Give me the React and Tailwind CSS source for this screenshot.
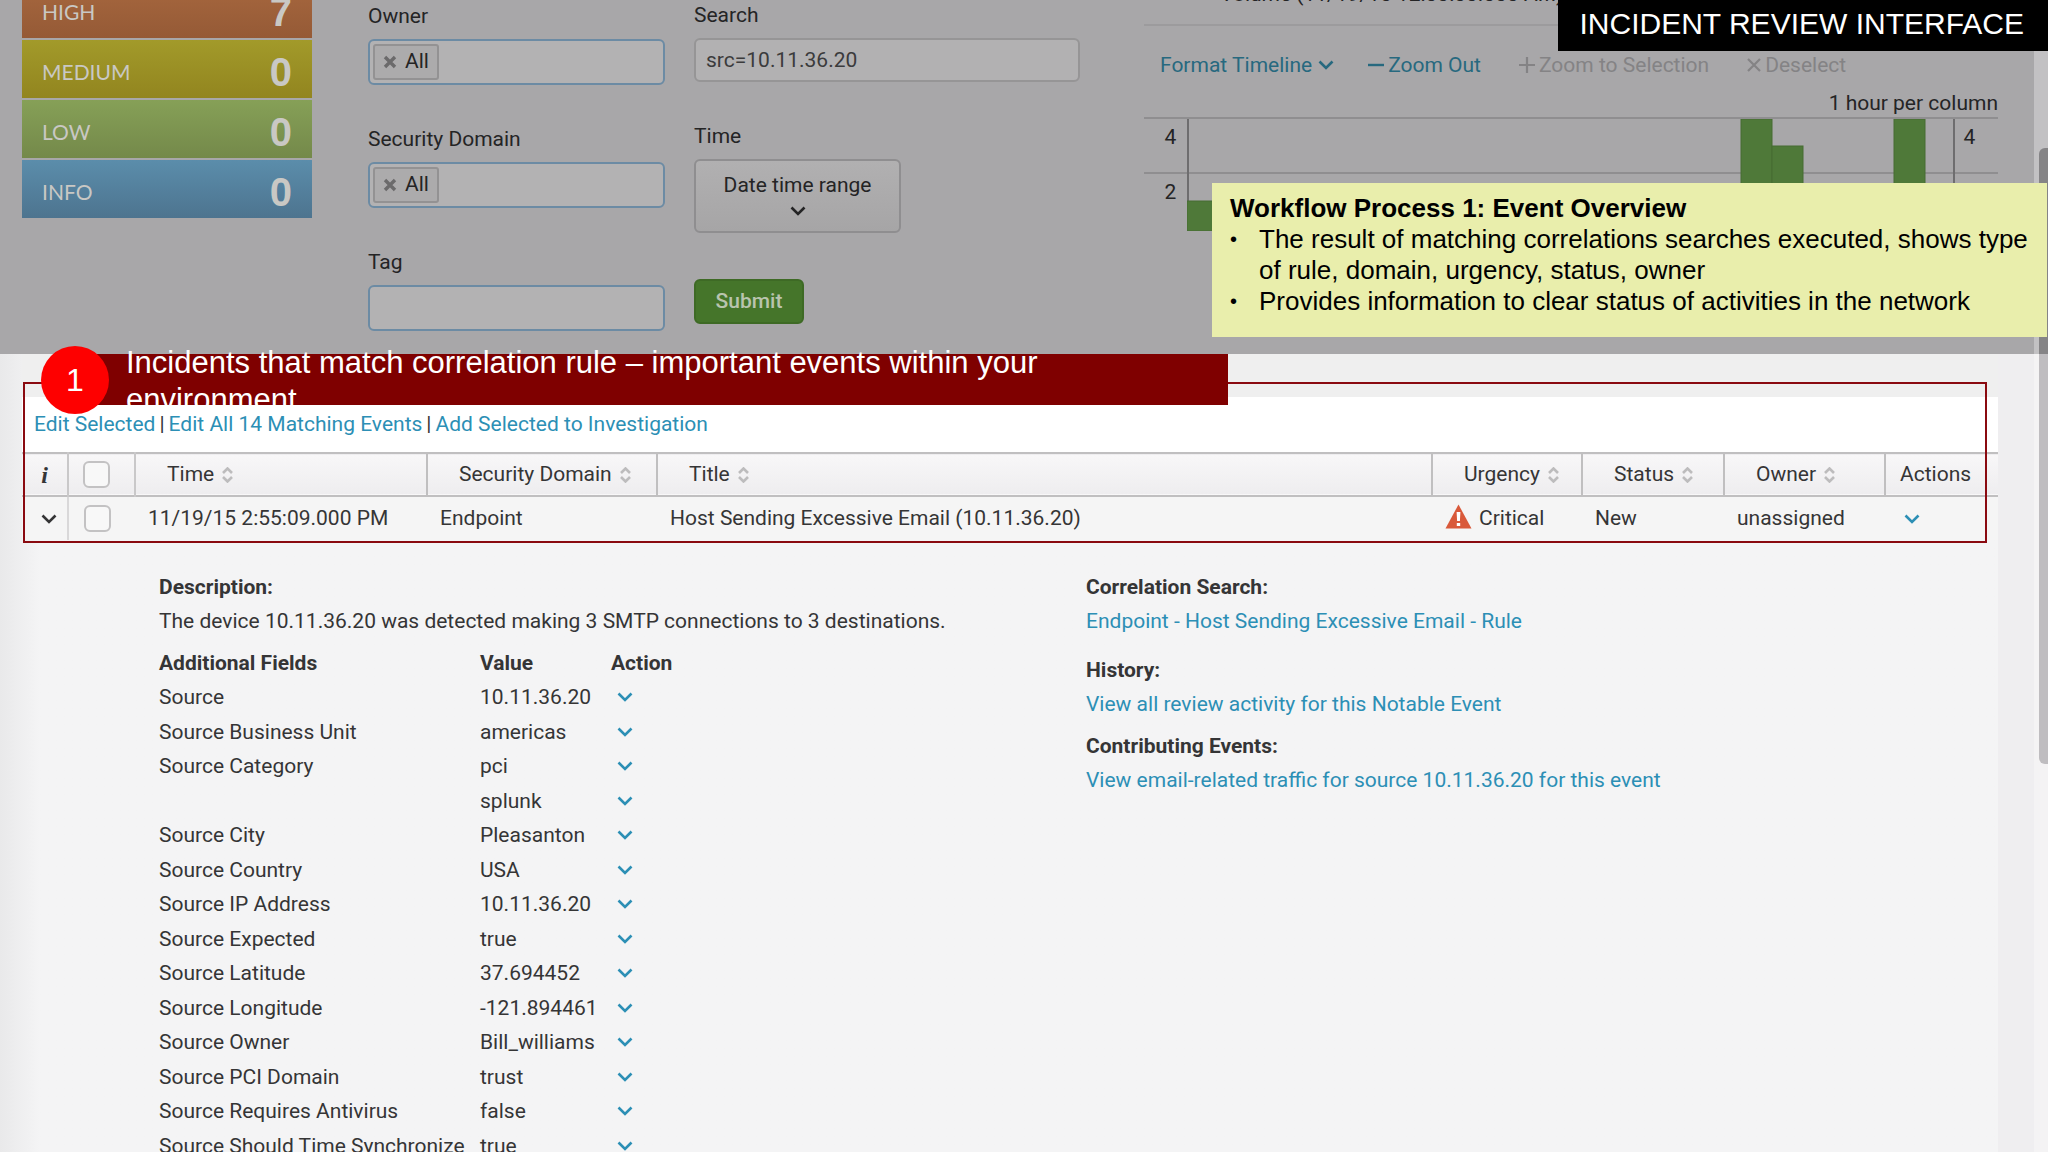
import React from 'react';
import clsx from 'clsx';

const severities = [
  { name: 'HIGH', count: 7, tone: 'from-[#a8683f] to-[#955a36]' },
  { name: 'MEDIUM', count: 0, tone: 'from-[#a29a2a] to-[#92851f]' },
  { name: 'LOW', count: 0, tone: 'from-[#86a057] to-[#74894a]' },
  { name: 'INFO', count: 0, tone: 'from-[#5b8dab] to-[#4d748f]' },
];

const columns = [
  { name: 'Time', width: 'w-[292px]' },
  { name: 'Security Domain', width: 'w-[230px]' },
  { name: 'Title', width: '' },
  { name: 'Urgency', width: 'w-[150px]' },
  { name: 'Status', width: 'w-[142px]' },
  { name: 'Owner', width: 'w-[161px]' },
];

const fields = [
  ['Source', '10.11.36.20'],
  ['Source Business Unit', 'americas'],
  ['Source Category', 'pci'],
  ['', 'splunk'],
  ['Source City', 'Pleasanton'],
  ['Source Country', 'USA'],
  ['Source IP Address', '10.11.36.20'],
  ['Source Expected', 'true'],
  ['Source Latitude', '37.694452'],
  ['Source Longitude', '-121.894461'],
  ['Source Owner', 'Bill_williams'],
  ['Source PCI Domain', 'trust'],
  ['Source Requires Antivirus', 'false'],
  ['Source Should Time Synchronize', 'true'],
];

const notes = [
  'The result of matching correlations searches executed, shows type of rule, domain, urgency, status, owner',
  'Provides information to clear status of activities in the network',
];

// x, y and height inside the 768x112 plot area
const bars = [
  [0, 82, 30],
  [554, 0, 112],
  [585, 27, 85],
  [707, 0, 112],
];

const Chevron = ({ className }) => (
  <svg className={clsx('w-4 h-[10px]', className)} viewBox="0 0 16 10" fill="none" stroke="currentColor" strokeWidth="2.6">
    <path d="M1.5 1.5 L8 8 L14.5 1.5" />
  </svg>
);

const SortIcon = () => (
  <svg className="w-[11px] h-4" viewBox="0 0 11 16" fill="none" stroke="#bdbcbd" strokeWidth="2.6">
    <path d="M1 6 L5.5 1.5 L10 6 M1 10 L5.5 14.5 L10 10" />
  </svg>
);

const AlertIcon = () => (
  <svg className="w-[27px] h-[30px]" viewBox="0 0 27 30">
    <path d="M13.5 0.5 L26.5 24.5 H0.5 Z" fill="#d9593a" />
    <path d="M11.6 8 H15.4 L14.9 17 H12.1 Z M11.8 19 H15.2 V22 H11.8 Z" fill="#fff" />
  </svg>
);

const TagInput = ({ id, label, tag }) => (
  <div className="flex flex-col gap-2">
    <label htmlFor={id} className="leading-[30px]">{label}</label>
    <div className="flex h-[46px] items-center rounded-md border-2 border-[#6c8ba4] bg-[#b3b2b3] px-[3px]">
      {tag && (
        <span className="flex h-9 shrink-0 items-center gap-2 rounded-[3px] border-2 border-[#939293] bg-[#acabac] px-2">
          <button type="button" aria-label={`Remove ${tag}`} className="text-[#6b6a6b]">
            <svg className="w-[14px] h-[14px]" viewBox="0 0 14 14" stroke="currentColor" strokeWidth="3.4">
              <path d="M2 2 L12 12 M12 2 L2 12" />
            </svg>
          </button>
          {tag}
        </span>
      )}
      <input id={id} type="text" className="min-w-0 flex-1 bg-transparent outline-none" />
    </div>
  </div>
);

const SeverityList = () => (
  <div className="-mt-5 flex w-[290px] flex-col gap-[2px]">
    {severities.map((s) => (
      <div key={s.name} className={clsx('flex h-[58px] items-center justify-between bg-linear-to-b px-5 pt-[6px] text-[#c9c8c4]', s.tone)}>
        <span className="font-['Lato'] text-[21px]">{s.name}</span>
        <span className="font-['Liberation_Sans'] text-[40px] leading-none font-bold">{s.count}</span>
      </div>
    ))}
  </div>
);

const FilterForm = () => (
  <form className="flex gap-[29px] pt-px" onSubmit={(e) => e.preventDefault()}>
    <div className="flex w-[297px] flex-col gap-[39px]">
      <TagInput id="owner" label="Owner" tag="All" />
      <TagInput id="domain" label="Security Domain" tag="All" />
      <TagInput id="tag" label="Tag" />
    </div>
    <div className="flex w-[386px] flex-col items-start">
      <label htmlFor="search" className="mb-[9px] leading-[28px]">Search</label>
      <input
        id="search"
        type="text"
        defaultValue="src=10.11.36.20"
        className="h-11 w-full rounded-md border-2 border-[#969596] bg-[#b2b1b2] px-[10px] text-[#3b3b3c] outline-none"
      />
      <span id="time" className="mt-10 mb-[9px] leading-[28px]">Time</span>
      <button type="button" aria-labelledby="time" className="flex h-[74px] w-[207px] flex-col items-center justify-center gap-2 rounded-md border-2 border-[#8f8e90] bg-linear-to-b from-[#b1b0b1] to-[#a6a5a6] pb-1">
        <span className="leading-[26px]">Date time range</span>
        <Chevron />
      </button>
      <button type="submit" className="mt-[46px] h-[45px] w-[110px] rounded-md border-2 border-[#3e6a25] bg-[#45752a] font-medium text-[#b9c4ae]">
        Submit
      </button>
    </div>
  </form>
);

const Timeline = () => (
  <div className="min-w-0 flex-1">
    <div className="h-[26px] overflow-hidden border-b-2 border-[#9c9b9d] pl-[76px]">
      <p className="-mt-[18px] leading-6 whitespace-nowrap">Volume (11/19/15 12:00:00.000 AM)</p>
    </div>
    <div className="flex items-center pt-[23px] pl-4 leading-8 text-[#27697f]">
      <button type="button" className="mr-[34px] flex items-center gap-[6px]">Format Timeline <Chevron /></button>
      <button type="button" className="mr-[38px] flex items-center gap-1">
        <svg className="h-4 w-4" viewBox="0 0 16 16" stroke="currentColor" strokeWidth="2.4"><path d="M0 8 H16" /></svg>
        Zoom Out
      </button>
      <button type="button" disabled className="mr-[38px] flex items-center gap-1 text-[#848385]">
        <svg className="h-4 w-4" viewBox="0 0 16 16" stroke="currentColor" strokeWidth="2.2"><path d="M0 8 H16 M8 0 V16" /></svg>
        Zoom to Selection
      </button>
      <button type="button" disabled className="flex items-center gap-1 text-[#848385]">
        <svg className="h-[14px] w-[14px]" viewBox="0 0 14 14" stroke="currentColor" strokeWidth="2.2"><path d="M1 1 L13 13 M13 1 L1 13" /></svg>
        Deselect
      </button>
    </div>
    <p className="pt-2 text-right leading-7">1 hour per column</p>
    <div className="flex border-t-2 border-[#8f8e90] text-center">
      <div className="w-[43px]">
        <p className="h-[55px] border-b-2 border-[#8f8e90] pl-[10px] leading-[36px]">4</p>
        <p className="pl-[10px] leading-[36px]">2</p>
      </div>
      <svg className="h-28 min-w-0 flex-1" viewBox="0 0 768 112" preserveAspectRatio="none">
        <path d="M0 54 H768" stroke="#8f8e90" strokeWidth="2" />
        <path d="M1 0 V112 M767 0 V112" stroke="#6e6d6f" strokeWidth="2" />
        {bars.map(([x, y, h]) => (
          <rect key={x} x={x} y={y} width="31" height={h} fill="#4f7939" stroke="#466c33" strokeWidth="1" />
        ))}
      </svg>
      <div className="w-[43px]">
        <p className="h-[55px] border-b-2 border-[#8f8e90] pr-[14px] leading-[36px]">4</p>
        <p className="pr-[14px] leading-[36px]">2</p>
      </div>
    </div>
  </div>
);

const EventTable = () => (
  <table className="w-full table-fixed border-collapse text-left">
    <thead>
      <tr className="h-[43px] border-y-2 border-[#c0bfc0] bg-linear-to-b from-[#f8f7f8] to-[#eeedef]">
        <th className="w-[46px] text-center font-['Liberation_Serif'] text-2xl leading-none font-bold italic">i</th>
        <th className="w-[67px] border-x-2 border-[#c9c8c9] pr-[10px]">
          <input type="checkbox" aria-label="Select all events" className="mx-auto block h-[27px] w-[27px] appearance-none rounded-md border-2 border-[#c3c2c3] bg-[#f8f8f8]" />
        </th>
        {columns.map((c) => (
          <th key={c.name} className={clsx('border-r-2 border-[#c0bfc0] pl-[31px] font-normal', c.width)}>
            <button type="button" className="flex items-center gap-2">{c.name} <SortIcon /></button>
          </th>
        ))}
        <th className="w-[113px] pl-[14px] font-normal">Actions</th>
      </tr>
    </thead>
    <tbody>
      <tr className="h-11 bg-[#f5f5f5]">
        <td className="pl-[19px]">
          <button type="button" aria-label="Collapse event" className="flex"><Chevron /></button>
        </td>
        <td className="border-l-2 border-[#d9d8d9] pr-[10px]">
          <input type="checkbox" aria-label="Select event" className="mx-auto block h-[27px] w-[27px] appearance-none rounded-md border-2 border-[#c3c2c3] bg-[#f8f8f8]" />
        </td>
        <td className="pl-[13px]">11/19/15 2:55:09.000 PM</td>
        <td className="pl-[13px]">Endpoint</td>
        <td className="pl-[13px]">Host Sending Excessive Email (10.11.36.20)</td>
        <td className="pl-[13px]">
          <span className="flex items-center gap-[7px]"><AlertIcon /> Critical</span>
        </td>
        <td className="pl-[13px]">New</td>
        <td className="pl-[13px]">unassigned</td>
        <td className="pl-[19px]">
          <button type="button" aria-label="Event actions" className="flex text-[#2c8fb5]"><Chevron /></button>
        </td>
      </tr>
    </tbody>
  </table>
);

const FieldTable = () => (
  <table className="h-[518px] text-left leading-[30px]">
    <thead>
      <tr className="h-[35px]">
        <th className="w-[321px] p-0 font-bold">Additional Fields</th>
        <th className="w-[131px] p-0 font-bold">Value</th>
        <th className="p-0 font-bold">Action</th>
      </tr>
    </thead>
    <tbody>
      {fields.map(([name, value]) => (
        <tr key={name + value}>
          <td className="p-0 whitespace-nowrap">{name}</td>
          <td className="p-0">{value}</td>
          <td className="p-0 pl-[6px]">
            <button type="button" aria-label={`Actions for ${value}`} className="flex text-[#2c8fb5]"><Chevron /></button>
          </td>
        </tr>
      ))}
    </tbody>
  </table>
);

const EventDetails = () => (
  <div className="grid grid-cols-[927px_1fr] pt-[30px] pl-[137px] leading-[34px]">
    <div>
      <h3 className="font-bold">Description:</h3>
      <p className="mb-[7px]">The device 10.11.36.20 was detected making 3 SMTP connections to 3 destinations.</p>
      <FieldTable />
    </div>
    <div>
      <h3 className="font-bold">Correlation Search:</h3>
      <a href="#rule" className="block text-[#2c8fb5]">Endpoint - Host Sending Excessive Email - Rule</a>
      <h3 className="mt-[15px] font-bold">History:</h3>
      <a href="#history" className="block text-[#2c8fb5]">View all review activity for this Notable Event</a>
      <h3 className="mt-2 font-bold">Contributing Events:</h3>
      <a href="#traffic" className="block text-[#2c8fb5]">View email-related traffic for source 10.11.36.20 for this event</a>
    </div>
  </div>
);

function App() {
  return (
    <div className="relative h-screen overflow-hidden bg-[#efeef0] font-['Roboto',sans-serif] text-[21px] text-[#353536]">
      {/* Dimmed filter area */}
      <section className="flex h-[354px] bg-[#a8a7a9] pr-[50px] pl-[22px] text-[#242425]">
        <SeverityList />
        <div className="ml-14"><FilterForm /></div>
        <div className="ml-16 flex min-w-0 flex-1"><Timeline /></div>
      </section>

      {/* Events */}
      <main className="mr-[50px] bg-linear-to-r from-[#e9e9ea] to-[#f4f4f5] to-[40px] pl-[22px]">
        <div className="h-[43px] bg-[#efefef]" />
        <div className="flex h-[55px] items-center gap-1 bg-white pl-3">
          <a href="#edit" className="text-[#2c8fb5]">Edit Selected</a> |
          <a href="#edit-all" className="text-[#2c8fb5]">Edit All 14 Matching Events</a> |
          <a href="#investigate" className="text-[#2c8fb5]">Add Selected to Investigation</a>
        </div>
        <EventTable />
        <EventDetails />
      </main>

      {/* Scrollbar */}
      <div className="absolute top-0 right-0 h-full w-[14px] bg-white/30">
        <div className="mt-[148px] ml-[5px] h-[616px] rounded-l-md bg-[#bfbdc0]">
          <div className="h-[206px] rounded-tl-md bg-[#858486]" />
        </div>
      </div>

      {/* Annotations */}
      <div className="absolute top-[382px] right-[61px] left-[23px] h-[161px] border-2 border-[#8a0a10]" />
      <div className="absolute top-[354px] left-[75px] flex h-[51px] w-[1153px] items-center bg-[#7f0000] pt-[2px] pr-16 pl-[51px] font-['Liberation_Sans'] text-[31px] leading-[37px] text-white">
        <p>Incidents that match correlation rule – important events within your environment</p>
      </div>
      <div className="absolute top-[346px] left-[41px] flex size-[68px] items-center justify-center rounded-full bg-[#fe0000] font-['Liberation_Sans'] text-[32px] text-white">1</div>
      <h1 className="absolute top-0 right-0 h-[51px] bg-black pr-6 pl-[22px] font-['Liberation_Sans'] text-[30px] leading-[47px] text-white">
        INCIDENT REVIEW INTERFACE
      </h1>
      <aside className="absolute top-[183px] right-px h-[154px] w-[835px] bg-[#e9eeac] px-[18px] pt-[10px] font-['Liberation_Sans'] text-[26px] leading-[31px] text-black">
        <h2 className="font-bold">Workflow Process 1: Event Overview</h2>
        <ul>
          {notes.map((note) => (
            <li key={note} className="flex before:w-[29px] before:shrink-0 before:text-xl before:leading-[31px] before:content-['•']">{note}</li>
          ))}
        </ul>
      </aside>
    </div>
  );
}

export default App;
